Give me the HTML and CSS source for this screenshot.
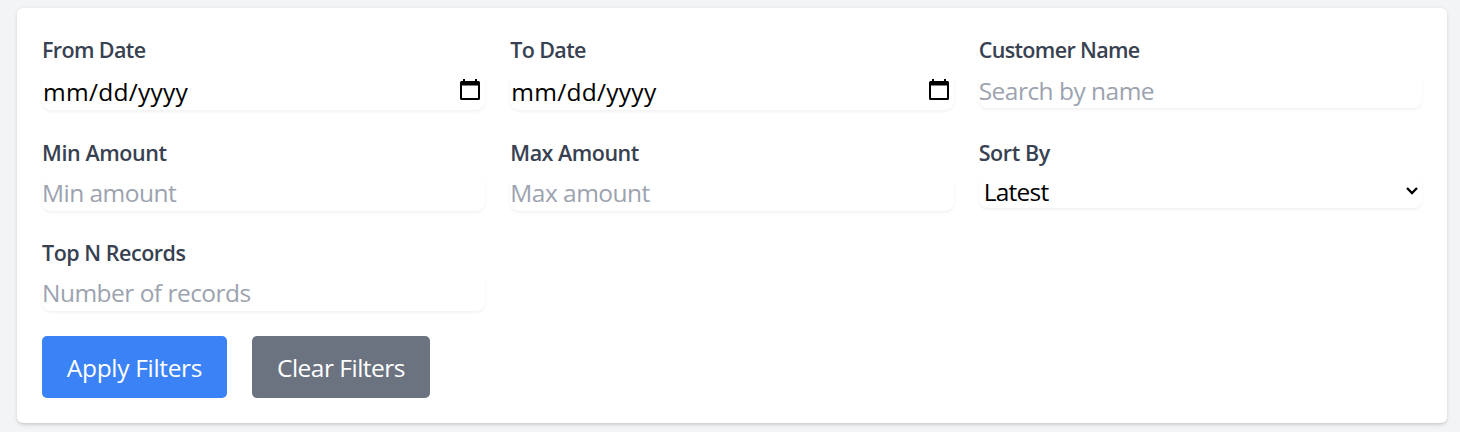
FILE: index.html
```html
<!DOCTYPE html>
<html lang="en">
<head>
<meta charset="utf-8">
<title>Filters</title>
<link rel="stylesheet" href="styles.css">
</head>
<body>
<form class="card">
  <div class="grid">
    <div class="field"><label class="label from" for="from">From Date</label>
      <div class="control date"><input id="from" class="input" placeholder="mm/dd/yyyy"><svg class="calendar" viewBox="0 0 20 22"><path fill="#000" fill-rule="evenodd" d="M3 0h2v2h10V0h2v2h1.500q1.500 0 1.500 1.500v16q0 1.500-1.500 1.500h-17q-1.500 0-1.500-1.500v-16q0-1.500 1.500-1.500h1.500zM2 6.500v12.500h16V6.500z"/></svg></div></div>
    <div class="field"><label class="label to" for="to">To Date</label>
      <div class="control date"><input id="to" class="input" placeholder="mm/dd/yyyy"><svg class="calendar" viewBox="0 0 20 22"><path fill="#000" fill-rule="evenodd" d="M3 0h2v2h10V0h2v2h1.500q1.500 0 1.500 1.500v16q0 1.500-1.500 1.500h-17q-1.500 0-1.500-1.500v-16q0-1.500 1.500-1.500h1.500zM2 6.500v12.500h16V6.500z"/></svg></div></div>
    <div class="field"><label class="label customer" for="name">Customer Name</label>
      <div class="control search"><input id="name" class="input" placeholder="Search by name"></div></div>
    <div class="field"><label class="label min" for="min">Min Amount</label>
      <div class="control amount"><input id="min" class="input min-input" placeholder="Min amount"></div></div>
    <div class="field"><label class="label max" for="max">Max Amount</label>
      <div class="control amount"><input id="max" class="input max-input" placeholder="Max amount"></div></div>
    <div class="field"><label class="label sort" for="sort">Sort By</label>
      <div class="control choice"><select id="sort" class="input"><option>Latest</option></select><svg class="chevron" viewBox="0 0 12 8"><path d="M1 1l5 5 5-5" fill="none" stroke="#000" stroke-width="2.300"/></svg></div></div>
    <div class="field"><label class="label top" for="top">Top N Records</label>
      <div class="control amount"><input id="top" class="input records-input" placeholder="Number of records"></div></div>
  </div>
  <div class="actions">
    <button type="button" class="button apply">Apply Filters</button>
    <button type="button" class="button clear">Clear Filters</button>
  </div>
</form>
</body>
</html>
```
FILE: styles.css
```css
* { box-sizing: border-box; }
body {
  margin: 0;
  height: 432px;
  overflow: hidden;
  padding: 8px 13px 0 17px;
  background: #f3f4f6;
  font-family: "Open Sans", "Noto Sans", sans-serif;
}
.card {
  height: 415px;
  padding: 25px 25px 0;
  background: #fff;
  border-radius: 6px;
  box-shadow: 0 1.5px 4px rgba(0, 0, 0, .1), 0 1.5px 3px -1px rgba(0, 0, 0, .1);
}
.grid {
  display: grid;
  grid-template-columns: repeat(3, 1fr);
  grid-template-rows: 103px 100px 100px;
  column-gap: 25px;
}
.field { display: flex; flex-direction: column; }
.label {
  height: 39px;
  padding-top: 1px;
  font-size: 21.5px;
  line-height: 31px;
  font-weight: 600;
  color: #374151;
  white-space: nowrap;
}
.from { letter-spacing: -.62px; }
.to { letter-spacing: -.65px; }
.customer { letter-spacing: -.65px; }
.min { letter-spacing: -.4px; }
.max { letter-spacing: -.5px; }
.sort { letter-spacing: -.4px; }
.top { letter-spacing: -.48px; }
.control {
  display: flex;
  align-items: center;
  height: 36px;
  border-radius: 9px;
  box-shadow: 0 1.5px 3px rgba(0, 0, 0, .05);
}
.date { height: 38px; padding: 1px 5px 0 1px; }
.search { padding-top: 1px; }
.choice { height: 33px; padding: 0 4px 0 5px; }
.input {
  flex: 1;
  min-width: 0;
  height: 34px;
  padding: 0;
  border: 0;
  outline: 0;
  appearance: none;
  background: transparent;
  color: #000;
  font: 24.5px/34px "Open Sans", "Noto Sans", sans-serif;
  letter-spacing: -.52px;
}
.input::placeholder { color: #9ca3af; opacity: 1; }
.date .input { letter-spacing: .27px; }
.date .input::placeholder { color: #000; }
.choice .input { letter-spacing: -.75px; }
.calendar { width: 20px; height: 22px; margin-bottom: 3px; }
.chevron { width: 12px; height: 8px; margin-bottom: 1px; }
.actions { display: flex; gap: 25px; }
.button {
  height: 62px;
  padding: 2px 0 0;
  border: 0;
  border-radius: 5px;
  color: #fff;
  font: 24.5px/36px "Open Sans", "Noto Sans", sans-serif;
  white-space: nowrap;
}
.apply { width: 185px; background: #3b82f6; letter-spacing: -.32px; }
.clear { width: 178px; background: #6b7280; letter-spacing: -.5px; }
```
